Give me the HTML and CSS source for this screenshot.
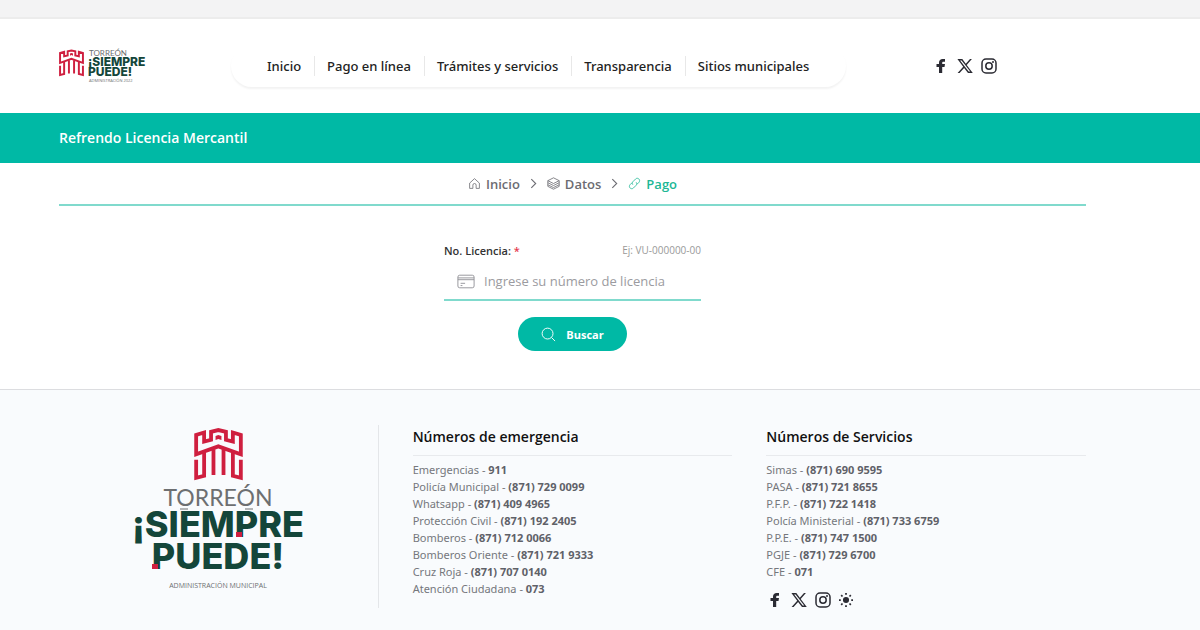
FILE: index.html
```
<!DOCTYPE html>
<html lang="es">
	<head>
		<meta charset="utf-8">
		<meta name="viewport" content="width=device-width, initial-scale=1">
		<title>Refrendo Licencia Mercantil</title>
		<link rel="stylesheet" href="styles.css">
	</head>
	<body>
		<!-- iconos compartidos -->
		<svg class="sprite" aria-hidden="true">
			<symbol id="castle" viewBox="0 0 141 153">
				<path class="line" d="M6 76V20L29 13V39L49 34V11L70 6L92 11V34L112 39V13L135 20V76L70 53Z"/>
				<path class="line" d="M6 92V144L29 138V71M56 61V136M85 61V136M112 71V138L135 144V92"/>
				<path d="M62 23L70 20L79 23V35L70 32L62 35Z"/>
			</symbol>
			<symbol id="facebook" viewBox="0 0 16 16">
				<path d="M6 15V9H3.500V6H6V4.700C6 2.300 7.500 1 9.600 1H12V3.800H10.500C9.500 3.800 9.200 4.200 9.200 5V6H12L11.500 9H9.200V15Z"/>
			</symbol>
			<symbol id="equis" viewBox="0 0 16 16">
				<path fill-rule="evenodd" d="M0.400 1H5.300L8.800 5.700L13 1H14.900L9.700 6.900L15.800 15H11L7.100 9.900L2.600 15H0.600L6.200 8.700ZM3.100 2.400L11.700 13.600H13.200L4.600 2.400Z"/>
			</symbol>
			<symbol id="instagram" viewBox="0 0 16 16">
				<rect class="line" x="1" y="1" width="14" height="14" rx="4" stroke-width="1.500"/>
				<circle class="line" cx="8" cy="8" r="3.200" stroke-width="1.500"/>
				<circle cx="12" cy="4" r="1"/>
			</symbol>
		</svg>

		<div class="topbar"></div>
		<header class="header">
			<a href="#" class="brand">
				<svg class="brand-logo" viewBox="0 0 88 36" role="img" aria-label="Torreón ¡Siempre Puede!">
					<use class="castle" href="#castle" x="0" y="1" width="25" height="28"/>
					<text class="logo-city" x="30" y="8" font-size="8">TORREÓN</text>
					<text class="logo-main" x="29" y="18" font-size="12">¡SIEMPRE</text>
					<text class="logo-main" x="29" y="28" font-size="12">PUEDE!</text>
					<text class="logo-sub" x="30" y="34" font-size="4">ADMINISTRACIÓN 2022</text>
				</svg>
			</a>
			<nav class="nav">
				<a href="#">Inicio</a>
				<a href="#">Pago en línea</a>
				<a href="#">Trámites y servicios</a>
				<a href="#">Transparencia</a>
				<a href="#">Sitios municipales</a>
			</nav>
			<div class="social">
				<a href="#" aria-label="Facebook"><svg><use href="#facebook"/></svg></a>
				<a href="#" aria-label="X"><svg><use href="#equis"/></svg></a>
				<a href="#" aria-label="Instagram"><svg><use href="#instagram"/></svg></a>
			</div>
		</header>

		<div class="band"><h1>Refrendo Licencia Mercantil</h1></div>

		<main class="main">
			<nav class="steps">
				<a href="#">
					<svg viewBox="0 0 16 16"><path d="M2 7.500L8 2L14 7.500V14H10V10A2 2 0 0 0 6 10V14H2Z"/></svg>
					Inicio
				</a>
				<svg class="arrow" viewBox="0 0 10 10"><path d="M3 1L7 5L3 9"/></svg>
				<a href="#">
					<svg viewBox="0 0 16 16"><path d="M8 1L15 4.500L8 8L1 4.500ZM1 4.500V11.500L8 15L15 11.500V4.500M1 7L8 10.500L15 7M1 9.500L8 13L15 9.500"/></svg>
					Datos
				</a>
				<svg class="arrow" viewBox="0 0 10 10"><path d="M3 1L7 5L3 9"/></svg>
				<a href="#" class="active">
					<svg viewBox="0 0 16 16"><path d="M6 9.500C4.800 8.300 5 6.800 6 5.800L9.500 2.300C12 0 16 3.500 13.500 6.500L11 9M10 6.500C11.200 7.700 11 9.200 10 10.200L6.500 13.700C4 16 0 12.500 2.500 9.500L5 7"/></svg>
					Pago
				</a>
			</nav>
			<form class="form">
				<div class="label-row">
					<label for="licencia">No. Licencia: <span class="required">*</span></label>
					<span class="hint">Ej: VU-000000-00</span>
				</div>
				<div class="field">
					<svg viewBox="0 0 20 16"><rect x="1" y="1" width="18" height="14" rx="2"/><path d="M1 4H19M1 6H19M4 10H9M4 12.500H6"/></svg>
					<input type="text" id="licencia" placeholder="Ingrese su número de licencia">
				</div>
				<button type="button" class="search">
					<svg viewBox="0 0 16 16"><circle cx="7" cy="7" r="5.800"/><path d="M11.200 11.200L15 15"/></svg>
					Buscar
				</button>
			</form>
		</main>

		<footer class="footer">
			<div class="footer-brand">
				<svg class="footer-logo" viewBox="0 0 172 164" role="img" aria-label="Torreón ¡Siempre Puede! Administración Municipal">
					<use class="castle" href="#castle" x="62" y="0" width="49" height="53"/>
					<text class="logo-city" x="86" y="78" font-size="23" text-anchor="middle">TORREÓN</text>
					<path class="logo-bar" d="M48 81H56M113 81H121"/>
					<text class="logo-main" x="86" y="109" font-size="36" text-anchor="middle">¡SIEMPRE</text>
					<text class="logo-main" x="86" y="141" font-size="36" text-anchor="middle">PUEDE!</text>
					<path class="logo-dot" d="M104 104H110V109H104ZM20 136H26V141H20Z"/>
					<text class="logo-sub" x="86" y="160" font-size="7" text-anchor="middle">ADMINISTRACIÓN MUNICIPAL</text>
				</svg>
			</div>
			<div class="phones">
				<h2>Números de emergencia</h2>
				<ul>
					<li>Emergencias - <b>911</b></li>
					<li>Policía Municipal - <b>(871) 729 0099</b></li>
					<li>Whatsapp - <b>(871) 409 4965</b></li>
					<li>Protección Civil - <b>(871) 192 2405</b></li>
					<li>Bomberos - <b>(871) 712 0066</b></li>
					<li>Bomberos Oriente - <b>(871) 721 9333</b></li>
					<li>Cruz Roja - <b>(871) 707 0140</b></li>
					<li>Atención Ciudadana - <b>073</b></li>
				</ul>
			</div>
			<div class="phones">
				<h2>Números de Servicios</h2>
				<ul>
					<li>Simas - <b>(871) 690 9595</b></li>
					<li>PASA - <b>(871) 721 8655</b></li>
					<li>P.F.P. - <b>(871) 722 1418</b></li>
					<li>Polcía Ministerial - <b>(871) 733 6759</b></li>
					<li>P.P.E. - <b>(871) 747 1500</b></li>
					<li>PGJE - <b>(871) 729 6700</b></li>
					<li>CFE - <b>071</b></li>
				</ul>
				<div class="social">
					<a href="#" aria-label="Facebook"><svg><use href="#facebook"/></svg></a>
					<a href="#" aria-label="X"><svg><use href="#equis"/></svg></a>
					<a href="#" aria-label="Instagram"><svg><use href="#instagram"/></svg></a>
					<button type="button" aria-label="Cambiar tema">
						<svg class="sun" viewBox="0 0 16 16"><circle cx="8" cy="8" r="3.500"/><path class="line" d="M8 0V2M8 14V16M0 8H2M14 8H16M2.500 2.500L4 4M12 12L13.500 13.500M2.500 13.500L4 12M12 4L13.500 2.500"/></svg>
					</button>
				</div>
			</div>
		</footer>
	</body>
</html>
```
FILE: styles.css
```
*{margin:0;padding:0;box-sizing:border-box;}
body{font-family:"Open Sans","Noto Sans",sans-serif;font-size:13px;color:#222;background:#fff;}
ul{list-style:none;}
a{text-decoration:none;color:inherit;}
button{border:0;background:none;font-family:inherit;color:inherit;cursor:pointer;}
svg{display:block;flex:none;}
.sprite{position:absolute;width:0;height:0;}
.line{fill:none;stroke:currentColor;}

.topbar{height:19px;background:#f3f3f4;border-bottom:2px solid #ececec;}

.header{display:flex;align-items:center;padding:26px 114px 26px 59px;}
.brand{width:172px;}
.brand-logo{width:88px;height:36px;}
.castle{color:#cf1f3f;fill:#cf1f3f;stroke-width:11px;}
.logo-city{font-family:Lato,sans-serif;fill:#6d6f71;}
.logo-main{font-family:Inter,sans-serif;font-weight:800;fill:#14463a;}
.logo-sub{font-family:"Open Sans",sans-serif;fill:#6d6f71;}
.logo-bar{stroke:#6d6f71;stroke-width:1px;}
.logo-dot{fill:#cf1f3f;}
.nav{display:flex;align-items:center;padding:11px 24px;border-radius:21px;box-shadow:0 2px 2px rgba(0,0,0,.05);}
.nav a{padding:0 13px 0 12px;line-height:20px;font-family:"Noto Sans","Open Sans",sans-serif;font-weight:500;font-size:13px;color:#222;border-left:1px solid #e8e8e8;}
.nav a:first-child{border-left:0;}
.nav a:hover{color:#00b9a5;}
.social{display:flex;align-items:center;gap:8px;color:#2b2b33;}
.social svg{width:16px;height:16px;fill:currentColor;}
.social .sun{width:14px;height:14px;stroke-width:2px;}
.header .social{margin-left:87px;}

.band{padding:14px 114px 14px 59px;background:#00b9a5;}
.band h1{line-height:22px;font-size:14px;font-weight:600;color:#fff;}

.main{margin:0 114px 0 59px;padding-bottom:38px;}
.steps{display:flex;align-items:center;justify-content:center;gap:8px;height:43px;border-bottom:2px solid #80dacd;color:#6c6c72;}
.steps a{display:flex;align-items:center;gap:5px;font-size:13px;font-weight:600;}
.steps svg{width:13px;height:13px;fill:none;stroke:currentColor;stroke-width:1px;}
.steps .arrow{width:11px;height:11px;}
.steps .active{color:#20b795;}

.form{display:flex;flex-direction:column;align-items:center;width:257px;margin:0 auto;padding-top:35px;}
.label-row{display:flex;justify-content:space-between;align-items:center;width:100%;height:18px;margin-bottom:2px;}
.label-row label{font-size:11px;font-weight:600;color:#333;}
.required{color:#e5394f;}
.hint{font-size:10px;color:#999;}
.field{display:flex;align-items:center;gap:9px;width:100%;height:40px;padding:2px 0 0 13px;border-bottom:2px solid #80dacd;}
.field svg{width:18px;height:15px;fill:none;stroke:#8f8f95;stroke-width:1px;}
.field input{flex:1;min-width:0;border:0;outline:0;background:none;font-family:inherit;font-size:13px;}
.field input::placeholder{color:#9b9ba0;}
.search{display:flex;align-items:center;justify-content:center;gap:10px;width:109px;height:34px;margin-top:16px;border-radius:17px;background:#00b9a5;color:#fff;font-size:11px;font-weight:700;}
.search svg{width:15px;height:15px;fill:none;stroke:currentColor;stroke-width:1px;}

.footer{display:grid;grid-template-columns:repeat(3,1fr);gap:34px;padding:35px 114px 22px 59px;background:#f9fbfd;border-top:1px solid #dcdde0;}
.footer-brand{display:flex;justify-content:center;border-right:1px solid #e4e6e9;}
.footer-logo{width:172px;height:164px;margin-top:3px;}
.phones h2{padding-bottom:7px;line-height:23px;font-size:14px;font-weight:600;color:#111;border-bottom:1px solid #e8eaed;}
.phones ul{padding-top:5px;}
.phones li{line-height:17px;font-family:"Noto Sans","Open Sans",sans-serif;font-size:11px;color:#75777c;}
.phones b{font-weight:700;color:#5f6168;}
.phones .social{padding:12px 0 0 1px;}
```
